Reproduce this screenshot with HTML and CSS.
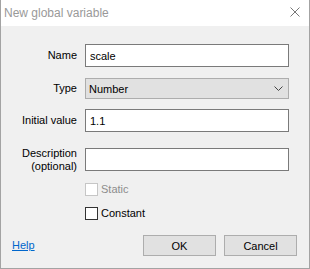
FILE: index.html
```html
<!DOCTYPE html>
<html lang="en">
<head>
  <meta charset="UTF-8">
  <title>New global variable</title>
  <link rel="stylesheet" href="styles.css">
</head>
<body>
  <div class="dialog">
    <div class="titlebar">
      <span class="title">New global variable</span>
      <svg class="close" width="10" height="10" viewBox="0 0 10 10">
        <path d="M0.5 0.5 L9.5 9.5 M9.5 0.5 L0.5 9.5" stroke="#777" stroke-width="1" fill="none"/>
      </svg>
    </div>

    <div class="content">
      <div class="row row-name">
        <span class="label">Name</span>
        <input class="field" type="text" value="scale">
      </div>

      <div class="row row-type">
        <span class="label">Type</span>
        <div class="select">
          <span>Number</span>
          <svg width="9" height="5" viewBox="0 0 9 5">
            <path d="M0.5 0.5 L4.5 4.5 L8.5 0.5" stroke="#444" stroke-width="1" fill="none"/>
          </svg>
        </div>
      </div>

      <div class="row row-init">
        <span class="label">Initial value</span>
        <input class="field" type="text" value="1.1">
      </div>

      <div class="row row-desc">
        <span class="label label-multi">Description<br>(optional)</span>
        <input class="field" type="text" value="">
      </div>

      <div class="row row-check row-static">
        <span></span>
        <div class="check disabled">
          <span class="box"></span>
          <span>Static</span>
        </div>
      </div>

      <div class="row row-check row-const">
        <span></span>
        <div class="check">
          <span class="box"></span>
          <span>Constant</span>
        </div>
      </div>

      <div class="footer">
        <a class="help" href="#">Help</a>
        <div class="buttons">
          <button class="btn">OK</button>
          <button class="btn">Cancel</button>
        </div>
      </div>
    </div>
  </div>
</body>
</html>
```

FILE: styles.css
```css
* {
  box-sizing: border-box;
}

body {
  margin: 0;
  font-family: "Liberation Sans", Arial, sans-serif;
  font-size: 11px;
  color: #000;
  background: #f0f0f0;
}

.dialog {
  width: 310px;
  height: 269px;
  border: 1px solid #a3a3a3;
  border-top: none;
  background: #f0f0f0;
  display: flex;
  flex-direction: column;
}

.titlebar {
  height: 26px;
  background: #fff;
  display: flex;
  align-items: center;
  justify-content: space-between;
  padding: 0 9px 0 3px;
}

.title {
  font-size: 12px;
  line-height: 26px;
  color: #999;
}

.close {
  display: block;
  margin-top: -3px;
}

.content {
  flex: 1;
  padding-top: 18px;
}

.row {
  display: grid;
  grid-template-columns: 76px 204px;
  column-gap: 8px;
  align-items: center;
  height: 23px;
}

.row-type { margin-top: 10px; }
.row-init { margin-top: 9px; }
.row-desc { margin-top: 13px; }

.row-check {
  height: 13px;
}

.row-static { margin-top: 15px; }
.row-const { margin-top: 11px; }

.label {
  text-align: right;
  line-height: 13px;
}

.label-multi {
  align-self: start;
  margin-top: 2px;
}

.field {
  height: 23px;
  width: 204px;
  margin: 0;
  border: 1px solid #7a7a7a;
  background: #fff;
  padding: 0 4px;
  font-family: inherit;
  font-size: 11px;
  color: #000;
  outline: none;
}

.select {
  height: 21px;
  width: 204px;
  border: 1px solid #adadad;
  background: #e1e1e1;
  display: flex;
  align-items: center;
  justify-content: space-between;
  padding: 0 5px 0 3px;
}

.select svg {
  display: block;
}

.check {
  display: flex;
  align-items: center;
  gap: 3px;
  line-height: 13px;
}

.box {
  width: 13px;
  height: 13px;
  border: 1px solid #333;
  background: #fff;
}

.check.disabled {
  color: #8d8d8d;
}

.check.disabled .box {
  border-color: #c6c6c6;
}

.footer {
  margin-top: 15px;
  height: 21px;
  display: flex;
  align-items: center;
  justify-content: space-between;
  padding: 0 12px 0 11px;
}

.help {
  color: #0066cc;
  text-decoration: underline;
  margin-top: -2px;
}

.buttons {
  display: flex;
  gap: 8px;
}

.btn {
  width: 73px;
  height: 21px;
  margin: 0;
  padding: 0;
  border: 1px solid #adadad;
  background: #e1e1e1;
  font-family: inherit;
  font-size: 11px;
  color: #000;
}
```
